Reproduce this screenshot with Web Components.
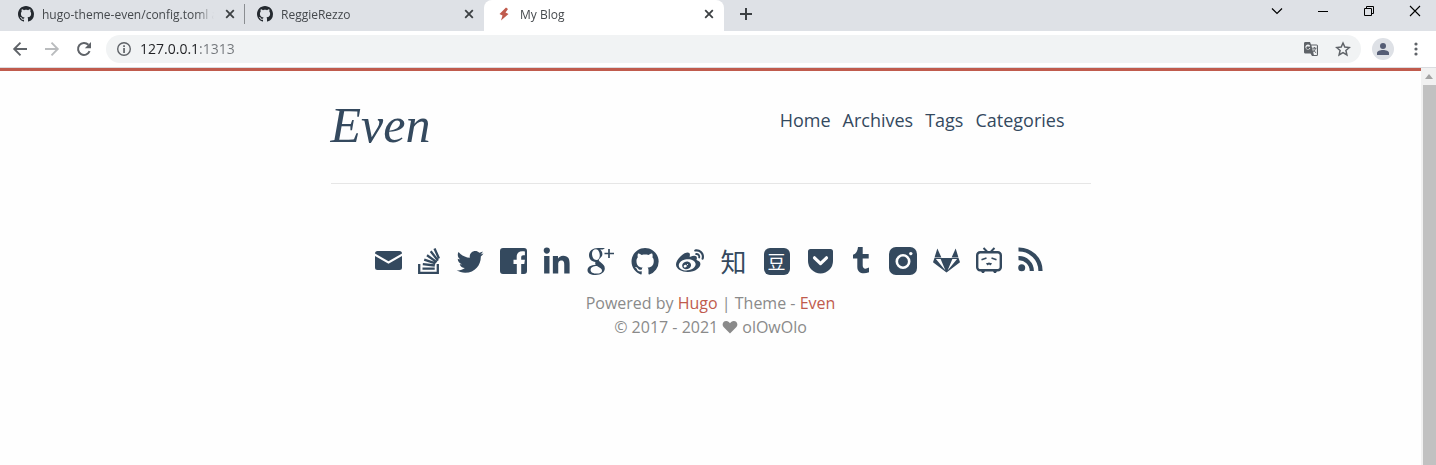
<!DOCTYPE html>
<html lang="en">
<head>
<meta charset="utf-8">
<title>My Blog</title>
<style>
  html, body { margin: 0; height: 100%; }
  body { font-family: "Open Sans", "Noto Sans CJK SC", sans-serif; background: #fefefe; }
</style>
</head>
<body>
<browser-window></browser-window>
<script>
const github = '<path d="M8 0C3.58 0 0 3.58 0 8c0 3.54 2.29 6.53 5.47 7.59.4.07.55-.17.55-.38 0-.19-.01-.82-.01-1.49-2.01.37-2.53-.49-2.69-.94-.09-.23-.48-.94-.82-1.13-.28-.15-.68-.52-.01-.53.63-.01 1.08.58 1.23.82.72 1.21 1.87.87 2.33.66.07-.52.28-.87.51-1.07-1.78-.2-3.64-.89-3.64-3.95 0-.87.31-1.59.82-2.15-.08-.2-.36-1.02.08-2.12 0 0 .67-.21 2.2.82.64-.18 1.32-.27 2-.27.68 0 1.36.09 2 .27 1.53-1.04 2.2-.82 2.2-.82.44 1.1.16 1.92.08 2.12.51.56.82 1.27.82 2.15 0 3.07-1.87 3.75-3.65 3.95.29.25.54.73.54 1.48 0 1.07-.01 1.93-.01 2.2 0 .21.15.46.55.38A8.013 8.013 0 0016 8c0-4.42-3.58-8-8-8z"/>';

/* name: [viewBox, markup] */
const ICONS = {
  github: ['0 0 16 16', github],
  bolt: ['0 0 16 16', '<path d="M10 1.500 3.500 8l3 1.400L5 14.500 12.500 8l-3-1.500L12 3z"/>'],
  close: ['0 0 16 16', '<path d="m4.200 4.200 7.600 7.600m0-7.600-7.600 7.600" fill="none" stroke="currentColor" stroke-width="1.800"/>'],
  plus: ['0 0 16 16', '<path d="M8 2v12M2 8h12" fill="none" stroke="currentColor" stroke-width="2"/>'],
  chevron: ['0 0 16 16', '<path d="m3 5.500 5 5 5-5" fill="none" stroke="currentColor" stroke-width="1.200"/>'],
  minimize: ['0 0 16 16', '<path d="M3 8h10v1H3z"/>'],
  restore: ['0 0 16 16', '<path d="M5.500 5.500v-2h7v7h-2M3.500 5.500h7v7h-7z" fill="none" stroke="currentColor"/>'],
  cross: ['0 0 16 16', '<path d="m3 3 10 10M13 3 3 13" fill="none" stroke="currentColor" stroke-width="1.100"/>'],
  back: ['0 0 16 16', '<path d="M15 8H2.500M8.500 1.600 2.200 8l6.300 6.400" fill="none" stroke="currentColor" stroke-width="1.900"/>'],
  forward: ['0 0 16 16', '<path d="M1 8h12.500M7.500 1.600 13.800 8l-6.300 6.400" fill="none" stroke="currentColor" stroke-width="1.900"/>'],
  reload: ['0 0 16 16', '<path d="M13.600 10.200A6 6 0 1 1 12.400 3.800" fill="none" stroke="currentColor" stroke-width="2"/><path d="M15 1v6.200H8.800z"/>'],
  info: ['0 0 16 16', '<circle cx="8" cy="8" r="6.300" fill="none" stroke="currentColor" stroke-width="1.400"/><path d="M7.200 7h1.700v5H7.200zM7.200 4.200h1.700v1.700H7.200z"/>'],
  translate: ['0 0 16 16', '<path d="M2 1h5l1 2.500h5.500A1.500 1.500 0 0 1 15 5v8.500a1.500 1.500 0 0 1-1.500 1.500H9l-1.500-2.500H2A1.200 1.200 0 0 1 1 11.300V2.200A1.200 1.200 0 0 1 2 1z"/><path d="m8.400 4.500 2.500 9.500h3V4.500zM7.200 4.800A2.600 2.600 0 1 0 7.400 7H5.200" fill="#f1f3f4"/><circle cx="4.800" cy="6.700" r="1.500"/><path d="M9.300 7.200h4.200M11.400 6v1.200M12.600 7.300c-.5 1.800-1.500 3-2.600 4M10.300 8.500c.6 1.500 1.700 2.600 2.800 3.200" fill="none" stroke="currentColor"/>'],
  star: ['0 0 16 16', '<path d="m8 2 1.800 4.100 4.500.4-3.400 3 1 4.400L8 11.600l-3.900 2.300 1-4.400-3.400-3 4.500-.4z" fill="none" stroke="currentColor" stroke-width="1.500"/>'],
  user: ['0 0 22 22', '<circle cx="11" cy="8" r="3"/><path d="M5 17v-2c0-2 3-3 6-3s6 1 6 3v2z"/>'],
  dots: ['0 0 16 16', '<circle cx="8" cy="3" r="1.600"/><circle cx="8" cy="8" r="1.600"/><circle cx="8" cy="13" r="1.600"/>'],
  up: ['0 0 16 16', '<path d="m4 10.500 4-5 4 5z"/>'],
  heart: ['0 0 16 16', '<path d="M8 14.500 1.800 8.300C-.6 5.700.9 2 4.200 2 6 2 7.300 3 8 4.300 8.700 3 10 2 11.800 2c3.300 0 4.800 3.700 2.400 6.300z"/>'],
  email: ['0 0 27 28', '<path d="M0 6.500A2.500 2.500 0 0 1 2.500 4h22A2.500 2.500 0 0 1 27 6.500l-13.500 7.800zM0 9l13.500 7.700L27 9v11.500a2.500 2.500 0 0 1-2.500 2.500h-22A2.500 2.500 0 0 1 0 20.500z"/>'],
  stackoverflow: ['0 0 22 28', '<path d="M1.200 17v8.800h18.600V17M4.500 21.700h12.200M4.800 17.200l12 1.300M6.200 12.600l11.300 3.800M9 8.200l9.700 6.900M12.700 4.300l7.300 9.300M16.500 1.500l4.500 10" fill="none" stroke="currentColor" stroke-width="2.300"/>'],
  twitter: ['-.6 -1.300 25 25', '<path d="M23.954 4.569c-.885.389-1.830.654-2.825.775 1.014-.611 1.794-1.574 2.163-2.723-.951.555-2.005.959-3.127 1.184-.896-.959-2.173-1.559-3.591-1.559-2.717 0-4.920 2.203-4.920 4.917 0 .39.045.765.127 1.124C7.691 8.094 4.066 6.130 1.640 3.161c-.427.722-.666 1.561-.666 2.475 0 1.710.87 3.213 2.188 4.096-.807-.026-1.566-.248-2.228-.616v.061c0 2.385 1.693 4.374 3.946 4.827-.413.111-.849.171-1.296.171-.314 0-.615-.03-.916-.086.631 1.953 2.445 3.377 4.604 3.417-1.680 1.319-3.809 2.105-6.102 2.105-.39 0-.779-.023-1.170-.067 2.189 1.394 4.768 2.209 7.557 2.209 9.054 0 13.999-7.496 13.999-13.986 0-.209 0-.42-.015-.63.961-.689 1.800-1.560 2.460-2.548z"/>'],
  facebook: ['0 0 27 28', '<path d="M3 1h21a3 3 0 0 1 3 3v20a3 3 0 0 1-3 3h-2.800V17h3.100l.6-4.200h-3.700v-2.500c0-1.300.6-2 2-2h1.700V4.500c-5.200-1.100-8.200.9-8.200 5.300v3H13.500V17h3.300v10H3a3 3 0 0 1-3-3V4a3 3 0 0 1 3-3z"/>'],
  linkedin: ['-12 -8 484 484', '<path d="M100.280 448H7.400V148.900h92.880zM53.790 108.100C24.090 108.100 0 83.500 0 53.800a53.790 53.790 0 0 1 107.580 0c0 29.700-24.100 54.300-53.790 54.300zM447.900 448h-92.680V302.400c0-34.700-.7-79.200-48.290-79.200-48.290 0-55.690 37.700-55.690 76.700V448h-92.780V148.900h89.080v40.800h1.300c12.400-23.500 42.690-48.300 87.880-48.300 94 0 111.280 61.900 111.280 142.300z"/>'],
  googleplus: ['0 0 28 28', '<path fill-rule="evenodd" d="M18 1h-7C5.500 1 2 4 2 8.300c0 3.700 2.700 6.500 6.500 6.600-.5 1-.4 2 .3 2.900C4 18 .5 20 .5 23.200.5 26 3.500 28 8.500 28c5.600 0 9.300-2.900 9.300-6.500 0-2.800-1.600-4.100-3.600-5.700-1.700-1.300-2.400-1.800-2.400-2.700 0-.8.8-1.500 1.500-2.200C14.600 9.800 15.400 8.600 15.400 7c0-2-.9-3.500-2.200-4.600h2.700zM9 2.200c2.200 0 3.800 3 3.800 6 0 2.400-1.100 4.800-3.400 4.800-2.700 0-4.400-3.200-4.400-6.300C5 4.200 6.500 2.200 9 2.200zm1 16.900c2.900 1.800 5 2.700 5 4.600 0 1.700-1.900 2.900-5 2.900-4 0-6.400-1.500-6.400-3.700 0-2.600 3-3.700 6.400-3.800z"/><path d="M22 2v9M17.500 6.500h9.500" fill="none" stroke="currentColor" stroke-width="1.700"/>'],
  githubBig: ['-.3 -.6 16.500 16.500', github],
  weibo: ['0 -10 512 512', '<path d="M407 177.600c7.600-24-13.400-46.800-37.400-41.700-22 4.800-28.800-28.100-7.100-32.800 50.100-10.900 92.300 37.100 76.500 84.800-6.800 21.200-38.800 10.800-32-10.300zM214.800 446.700C108.500 446.700 0 395.300 0 310.400c0-44.300 28-95.400 76.300-143.700C176 67 279.500 65.800 249.900 161c-4 13.100 12.300 5.700 12.300 6 79.500-33.600 140.500-16.800 114 51.400-3.700 9.400 1.100 10.900 8.300 13.100 135.700 42.300 34.800 215.200-169.700 215.200zm143.700-146.300c-5.400-55.700-78.500-94-163.400-85.700-84.800 8.600-148.800 60.300-143.400 116s78.500 94 163.400 85.700c84.800-8.600 148.800-60.300 143.400-116zM347.900 35.100c-25.900 5.600-16.800 43.700 8.300 38.300 72.300-15.200 134.800 52.800 111.700 124-7.400 24.200 29.100 37 37.400 12 31.900-99.800-55.100-195.900-157.400-174.300zm-78.500 311c-17.100 38.800-66.800 60-109.100 46.300-40.800-13.100-58-53.400-40.300-89.700 17.700-35.400 63.100-55.400 103.400-45.100 42 10.800 63.100 50.200 46 88.500zm-86.300-30c-12.900-5.400-30 .3-38 12.900-8.300 12.900-4.300 28 8.600 34 13.100 6 30.800.3 39.100-12.900 8-13.100 3.700-28.300-9.700-34zm32.600-13.400c-5.100-1.700-11.400.6-14.300 5.400-2.900 5.100-1.400 10.600 3.700 12.900 5.100 2 11.700-.3 14.600-5.400 2.800-5.200 1.100-10.900-4-12.900z"/>'],
  pocket: ['0 0 28 28', '<path d="M3.500 2h20A2.500 2.500 0 0 1 26 4.500V14a12.500 12.500 0 0 1-25 0V4.500A2.500 2.500 0 0 1 3.500 2z"/><path d="m7.500 10.800 6 5.800 6-5.800" fill="none" stroke="#fefefe" stroke-width="3.200" stroke-linecap="round" stroke-linejoin="round"/>'],
  tumblr: ['2 0 22 28', '<path d="M9 0h4.700v7h6v4.600h-6v7c0 3.300 2.600 4 6.300 2v4.600c-6 2.400-11.700.8-11.700-5.200v-8.400H4V7.800C7.200 6.700 8.600 4 9 0z"/>'],
  instagram: ['0 0 28 28', '<rect width="28" height="28" rx="7"/><circle cx="14" cy="14.500" r="6.200" fill="none" stroke="#fefefe" stroke-width="2.600"/><circle cx="21.800" cy="6.600" r="1.700" fill="#fefefe"/>'],
  gitlab: ['0 0 28 28', '<path d="M4.500 1 8.700 10.300H1.600zM23.500 1l2.900 9.300h-7.100zM1.500 11 0 15.300 14 26l14-10.700-1.500-4.300z"/><path d="M3 12h4.900l5 11.800zM25 12h-4.900l-5 11.800z" fill="#fefefe"/>'],
  bilibili: ['0 0 26 28', '<path d="m7.500 1 3.500 3.500M18.500 1 15 4.500" fill="none" stroke="currentColor" stroke-width="2"/><rect x="1.200" y="5.200" width="23.600" height="18" rx="3" fill="none" stroke="currentColor" stroke-width="2.400"/><path d="m5.500 12.800 5-1.800M20.500 12.800l-5-1.800M10.500 16.200l1.300 1.200 1.200-1.200 1.200 1.200 1.300-1.200" fill="none" stroke="currentColor" stroke-width="1.500"/><path d="M5 24h4l-1 2H6zM17 24h4l-1 2h-2z"/>'],
  rss: ['0 0 25 28', '<circle cx="3.700" cy="20.700" r="3.500"/><path d="M.5 11.200A12.800 12.800 0 0 1 13.800 24M.5 2.500A21.500 21.500 0 0 1 22.500 24" fill="none" stroke="currentColor" stroke-width="4.200"/>']
};

const define = (name, html, setup) => customElements.define(name, class extends HTMLElement {
  constructor() {
    super();
    const t = document.createElement('template');
    t.innerHTML = html;
    this.attachShadow({ mode: 'open' }).append(t.content.cloneNode(true));
  }
  connectedCallback() { if (setup) setup(this, this.shadowRoot); }
});

define('ui-icon', `
  <style>
    :host { display: block; flex: none; width: 16px; height: 16px; }
    svg { display: block; width: 100%; height: 100%; }
  </style>
  <svg fill="currentColor" aria-hidden="true"></svg>`, (el, root) => {
  const [box, art] = ICONS[el.getAttribute('name')];
  const svg = root.querySelector('svg');
  svg.setAttribute('viewBox', box);
  svg.innerHTML = art;
});

define('browser-tab', `
  <style>
    :host { display: flex; align-items: center; gap: 8px; box-sizing: border-box; width: 239px; height: 31px;
      padding: 0 7px 3px 12px; font-size: 12px; color: #45494d; }
    :host([active]) { width: 240px; background: #fff; border-radius: 8px 8px 0 0; }
    :host([divided]) { background: linear-gradient(#8a8d91, #8a8d91) right 4px / 1px 20px no-repeat; }
    ::slotted(ui-icon) { color: #24292f; }
    :host([active]) ::slotted(ui-icon) { color: #c05b4d; }
    .title { flex: 1; overflow: hidden; white-space: nowrap; line-height: 20px; padding-top: 2px;
      mask-image: linear-gradient(to right, #000 calc(100% - 18px), transparent); }
    button { display: block; border: 0; padding: 0; background: none; color: #3c4043; }
  </style>
  <slot name="icon"></slot><span class="title"><slot></slot></span>
  <button aria-label="Close tab"><ui-icon name="close"></ui-icon></button>`);

define('tab-strip', `
  <style>
    :host { display: flex; height: 31px; padding-left: 6px; background: #dee1e6; overflow: hidden; }
    button { display: block; border: 0; padding: 0; background: none; color: #000; }
    .new { padding: 0 14px 3px; color: #3c4043; }
    .system { display: flex; gap: 30px; margin-left: auto; padding: 0 13px 9px 0; align-items: center; }
  </style>
  <slot></slot>
  <button class="new" aria-label="New tab"><ui-icon name="plus"></ui-icon></button>
  <div class="system">
    <button aria-label="Search tabs"><ui-icon name="chevron"></ui-icon></button>
    <button aria-label="Minimize"><ui-icon name="minimize"></ui-icon></button>
    <button aria-label="Restore"><ui-icon name="restore"></ui-icon></button>
    <button aria-label="Close"><ui-icon name="cross"></ui-icon></button>
  </div>`);

define('address-bar', `
  <style>
    :host { display: flex; align-items: center; height: 36px; padding: 0 12px; background: #fff;
      border-bottom: 1px solid #dadce0; color: #5f6368; }
    button { display: block; border: 0; padding: 0; background: none; color: inherit; }
    .nav { display: flex; gap: 16px; margin-right: 14px; }
    button:disabled { color: #babcbe; }
    .box { flex: 1; display: flex; align-items: center; gap: 8px; height: 28px; padding: 0 10px; border-radius: 14px; background: #f1f3f4; }
    input { flex: 1; min-width: 0; border: 0; padding: 0; outline: 0; font: 14px/24px "Open Sans", sans-serif; color: transparent;
      background: linear-gradient(to right, #202124 59px, #72767a 59px); background-clip: text; -webkit-background-clip: text; }
    .tools { display: flex; gap: 16px; }
    .avatar { margin: 0 14px 0 11px; border-radius: 50%; background: #dee1e6; color: #555d75; }
    .avatar ui-icon { width: 22px; height: 22px; }
  </style>
  <div class="nav">
    <button aria-label="Back"><ui-icon name="back"></ui-icon></button>
    <button aria-label="Forward" disabled><ui-icon name="forward"></ui-icon></button>
    <button aria-label="Reload"><ui-icon name="reload"></ui-icon></button>
  </div>
  <div class="box">
    <ui-icon name="info"></ui-icon>
    <input type="text" aria-label="Address" value="127.0.0.1:1313">
    <div class="tools">
      <button aria-label="Translate this page"><ui-icon name="translate"></ui-icon></button>
      <button aria-label="Bookmark this page"><ui-icon name="star"></ui-icon></button>
    </div>
  </div>
  <button class="avatar" aria-label="Profile"><ui-icon name="user"></ui-icon></button>
  <button aria-label="Menu"><ui-icon name="dots"></ui-icon></button>`);

define('scroll-rail', `
  <style>
    :host { display: flex; flex-direction: column; width: 15px; background: #f1f1f1; color: #a3a3a3; }
    ui-icon { height: 17px; }
    .thumb { flex: 1; margin-left: 2px; background: #c1c1c1; }
  </style>
  <ui-icon name="up"></ui-icon><div class="thumb"></div>`);

define('site-header', `
  <style>
    :host { display: flex; justify-content: space-between; align-items: flex-start; padding: 26px 26px 30px 0; border-bottom: 1px solid #e6e6e6; }
    a { color: #34495e; text-decoration: none; }
    .logo { font: italic 50px/56px "Liberation Serif", serif; }
    nav { display: flex; gap: 12px; padding-top: 10px; font-size: 18px; line-height: 26px; }
  </style>
  <a class="logo" href="#">Even</a>
  <nav><a href="#">Home</a><a href="#">Archives</a><a href="#">Tags</a><a href="#">Categories</a></nav>`);

define('social-link', `
  <style>
    :host { display: block; }
    a { display: flex; align-items: center; justify-content: center; height: 28px; color: #34495e; text-decoration: none; }
    ui-icon { width: 100%; height: 28px; }
    .glyph { font: 26px/28px "Noto Sans CJK SC", sans-serif; }
    .tile { width: 26px; height: 27px; border-radius: 6px; background: #34495e; color: #fefefe;
      font: 18px/26px "Noto Sans CJK SC", sans-serif; text-align: center; }
  </style>
  <a href="#"></a>`, (el, root) => {
  const a = root.querySelector('a');
  el.style.width = el.getAttribute('size') + 'px';
  a.setAttribute('aria-label', el.getAttribute('label'));
  const text = el.getAttribute('text');
  if (text) {
    a.innerHTML = '<span class="' + el.getAttribute('look') + '">' + text + '</span>';
  } else {
    a.innerHTML = '<ui-icon name="' + el.getAttribute('icon') + '"></ui-icon>';
  }
});

define('site-footer', `
  <style>
    :host { display: block; padding-top: 63px; text-align: center; font-size: 16px; line-height: 24px; color: #8a8a8a; }
    .social { display: flex; justify-content: center; gap: 16px; margin: 0 4px 16px 0; }
    a { color: #c05b4d; text-decoration: none; }
    p { margin: 0; }
    .copy { display: flex; justify-content: center; align-items: center; gap: 4px; }
  </style>
  <div class="social">
    <social-link size="27" label="Email" icon="email"></social-link>
    <social-link size="22" label="Stack Overflow" icon="stackoverflow"></social-link>
    <social-link size="28" label="Twitter" icon="twitter"></social-link>
    <social-link size="27" label="Facebook" icon="facebook"></social-link>
    <social-link size="28" label="LinkedIn" icon="linkedin"></social-link>
    <social-link size="28" label="Google Plus" icon="googleplus"></social-link>
    <social-link size="28" label="GitHub" icon="githubBig"></social-link>
    <social-link size="30" label="Weibo" icon="weibo"></social-link>
    <social-link size="26" label="Zhihu" text="知" look="glyph"></social-link>
    <social-link size="28" label="Douban" text="豆" look="tile"></social-link>
    <social-link size="28" label="Pocket" icon="pocket"></social-link>
    <social-link size="22" label="Tumblr" icon="tumblr"></social-link>
    <social-link size="28" label="Instagram" icon="instagram"></social-link>
    <social-link size="27" label="GitLab" icon="gitlab"></social-link>
    <social-link size="26" label="Bilibili" icon="bilibili"></social-link>
    <social-link size="25" label="RSS" icon="rss"></social-link>
  </div>
  <p>Powered by <a href="#">Hugo</a> | Theme - <a href="#">Even</a></p>
  <p class="copy"><span>© 2017 - 2021</span><ui-icon name="heart"></ui-icon><span>olOwOlo</span></p>`);

define('blog-page', `
  <style>
    :host { display: block; border-top: 3px solid #c05b4d; background: #fefefe; }
    main { max-width: 760px; margin: 0 auto; }
  </style>
  <main><site-header></site-header><site-footer></site-footer></main>`);

define('browser-window', `
  <style>
    :host { display: flex; flex-direction: column; min-height: 100%; }
    .view { flex: 1; display: flex; }
    blog-page { flex: 1; }
  </style>
  <tab-strip>
    <browser-tab divided><ui-icon slot="icon" name="github"></ui-icon>hugo-theme-even/config.toml at master</browser-tab>
    <browser-tab><ui-icon slot="icon" name="github"></ui-icon>ReggieRezzo</browser-tab>
    <browser-tab active><ui-icon slot="icon" name="bolt"></ui-icon>My Blog</browser-tab>
  </tab-strip>
  <address-bar></address-bar>
  <div class="view"><blog-page></blog-page><scroll-rail></scroll-rail></div>`);
</script>
</body>
</html>
